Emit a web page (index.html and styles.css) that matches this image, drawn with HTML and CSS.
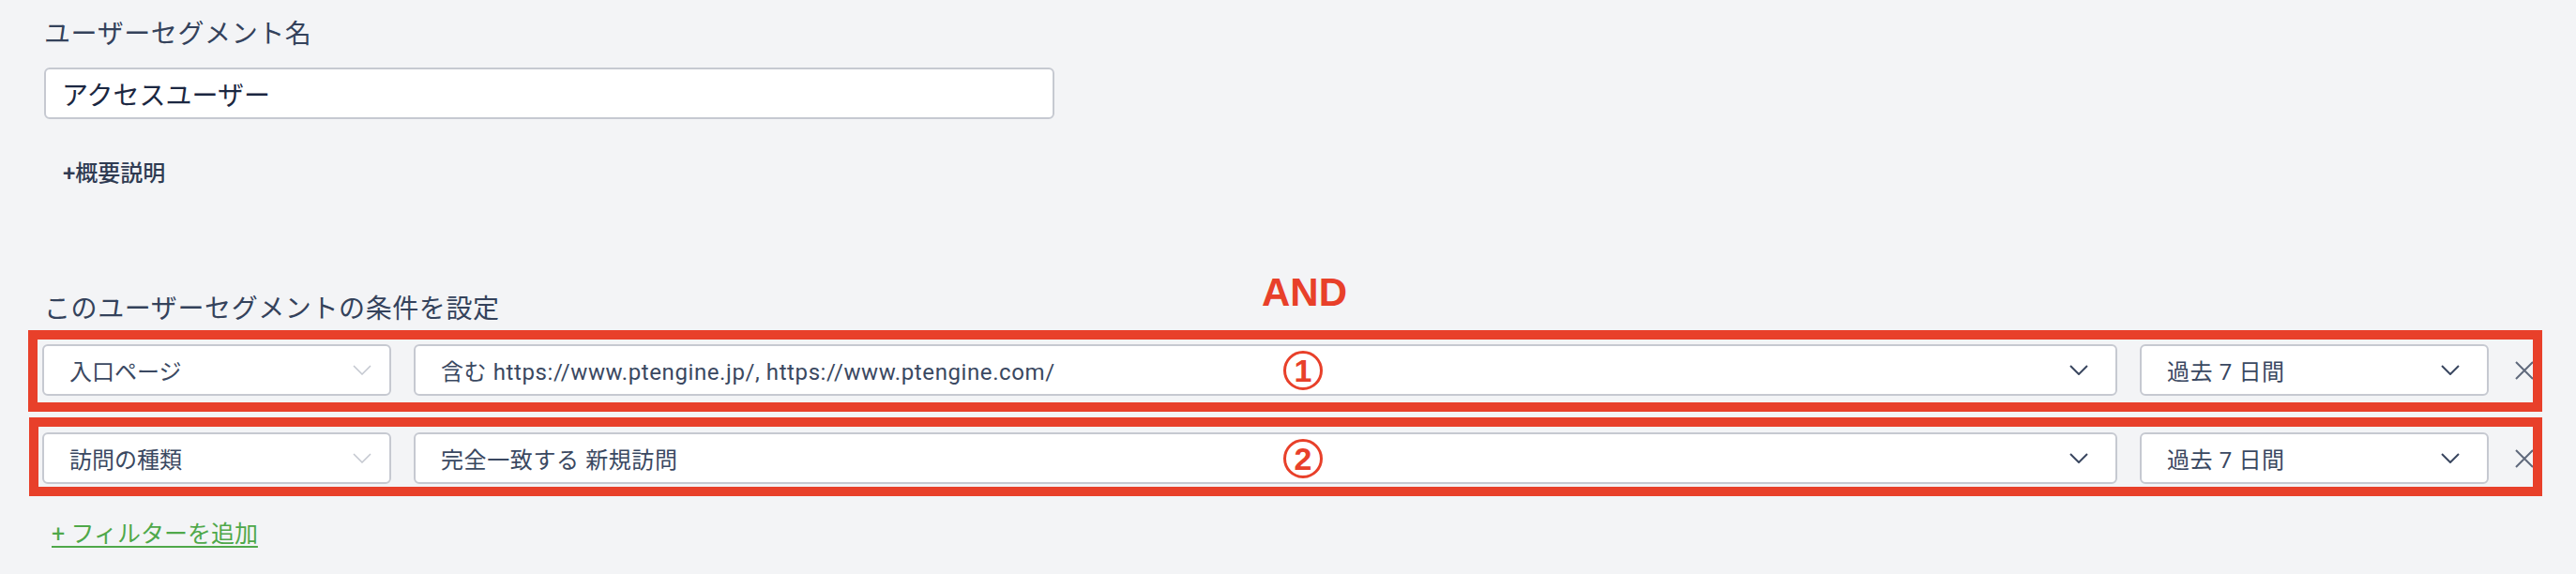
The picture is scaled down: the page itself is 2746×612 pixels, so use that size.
FILE: index.html
```html
<!DOCTYPE html>
<html lang="ja">
  <head>
    <meta charset="UTF-8">
    <title>ユーザーセグメント</title>
    <link rel="stylesheet" href="styles.css">
  </head>
  <body>
    <!-- セグメント名 -->
    <section class="name-section">
      <h2 class="label">ユーザーセグメント名</h2>
      <input class="text-input" type="text" value="アクセスユーザー">
      <div class="desc-link">+概要説明</div>
    </section>

    <!-- 条件 -->
    <section class="conditions">
      <h2 class="label">このユーザーセグメントの条件を設定</h2>
      <span class="and-mark">AND</span>

      <div class="cond-list">
        <div class="cond-row">
          <div class="select select-type">
            <span>入口ページ</span>
            <svg class="chevron light" viewBox="0 0 20 11"><polyline points="1,1 10,10 19,1"/></svg>
          </div>
          <div class="select select-value">
            <span>含む https://www.ptengine.jp/, https://www.ptengine.com/</span>
            <svg class="chevron" viewBox="0 0 20 11"><polyline points="1,1 10,10 19,1"/></svg>
          </div>
          <div class="select select-range">
            <span>過去 7 日間</span>
            <svg class="chevron" viewBox="0 0 20 11"><polyline points="1,1 10,10 19,1"/></svg>
          </div>
          <button class="remove" type="button">
            <svg viewBox="0 0 20 20"><path d="M1 1 L19 19 M19 1 L1 19"/></svg>
          </button>
          <span class="num-mark">1</span>
        </div>

        <div class="cond-row">
          <div class="select select-type">
            <span>訪問の種類</span>
            <svg class="chevron light" viewBox="0 0 20 11"><polyline points="1,1 10,10 19,1"/></svg>
          </div>
          <div class="select select-value">
            <span>完全一致する 新規訪問</span>
            <svg class="chevron" viewBox="0 0 20 11"><polyline points="1,1 10,10 19,1"/></svg>
          </div>
          <div class="select select-range">
            <span>過去 7 日間</span>
            <svg class="chevron" viewBox="0 0 20 11"><polyline points="1,1 10,10 19,1"/></svg>
          </div>
          <button class="remove" type="button">
            <svg viewBox="0 0 20 20"><path d="M1 1 L19 19 M19 1 L1 19"/></svg>
          </button>
          <span class="num-mark">2</span>
        </div>
      </div>

      <a class="add-filter" href="#">+ フィルターを追加</a>
    </section>
  </body>
</html>
```

FILE: styles.css
```css
body { margin: 0; padding: 17px 45px 0; background: #f3f4f6; font-family: Roboto, "Noto Sans CJK JP", sans-serif; color: #34425b; }

.label { margin: 0 0 0 2px; font-size: 28px; line-height: 40px; font-weight: 400; letter-spacing: 0.6px; color: #34425b; }

.text-input { display: block; box-sizing: border-box; width: 1077px; height: 55px; margin: 15px 0 0 2px; padding: 0 17px; border: 2px solid #c6c9d1; border-radius: 6px; background: #fff; font-family: Roboto, "Noto Sans CJK JP", sans-serif; font-size: 28px; color: #1b2741; outline: none; }

.desc-link { margin: 41px 0 0 22px; font-size: 24px; line-height: 34px; font-weight: 500; color: #2f3b52; }

.conditions { position: relative; margin-top: 108px; }
.and-mark { position: absolute; top: -19px; left: 1300px; font-family: "Liberation Sans", Arial, sans-serif; font-weight: bold; font-size: 42px; line-height: 42px; color: #e8402a; }

.cond-list { display: flex; flex-direction: column; gap: 39px; margin-top: 17px; }
.cond-row { position: relative; display: flex; align-items: center; gap: 24px; height: 55px; }
.cond-row::after { content: ""; position: absolute; left: -15px; right: -9px; top: -15px; bottom: -17px; border: 10px solid #e8402a; pointer-events: none; }
.cond-row + .cond-row::after { top: -16px; bottom: -13px; left: -14px; }

.select { display: flex; align-items: center; justify-content: space-between; box-sizing: border-box; height: 55px; padding: 0 29px 0 27px; border: 2px solid #c6c9d1; border-radius: 6px; background: #fff; font-size: 24px; color: #3a4861; white-space: nowrap; }
.select-type { width: 372px; padding-right: 19px; }
.select-value { flex: 1; letter-spacing: 0.6px; }
.select-range { width: 372px; letter-spacing: 0.6px; }

.chevron { width: 20px; height: 11px; fill: none; stroke: #3a4760; stroke-width: 2; }
.chevron.light { stroke: #c3c7cf; stroke-width: 1.5; }

.remove { width: 20px; height: 20px; margin-left: 4px; padding: 0; border: none; background: none; }
.remove svg { display: block; width: 20px; height: 20px; fill: none; stroke: #5f697c; stroke-width: 2; }

.num-mark { position: absolute; left: 1323px; top: 7px; display: flex; align-items: center; justify-content: center; box-sizing: border-box; width: 42px; height: 42px; border: 3px solid #e8402a; border-radius: 50%; font-family: "Liberation Sans", Arial, sans-serif; font-weight: bold; font-size: 34px; line-height: 1; color: #e8402a; }

.add-filter { display: inline-block; margin: 37px 0 0 10px; font-size: 25px; line-height: 34px; color: #4fa84a; text-decoration: underline; text-decoration-thickness: 2px; text-underline-offset: 4px; }
```
